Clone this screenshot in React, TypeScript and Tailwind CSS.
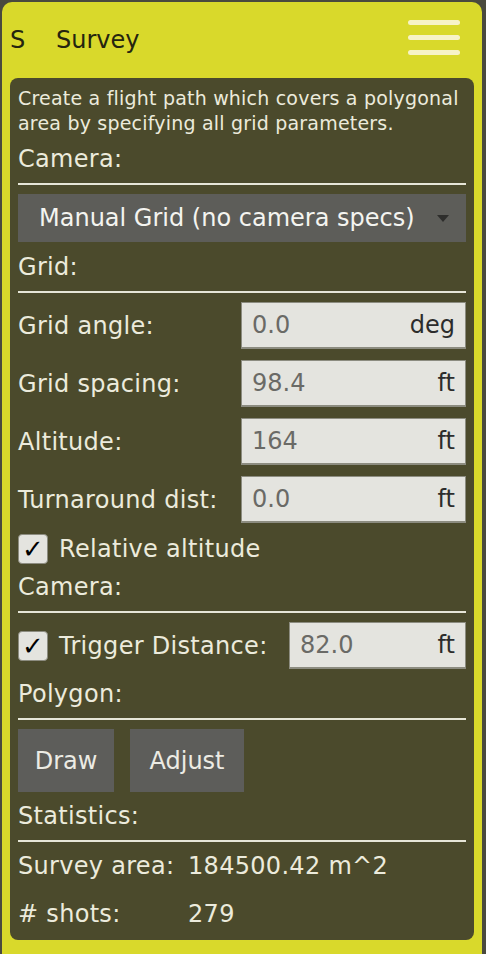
const font = "font-['DejaVu_Sans','Liberation_Sans',sans-serif]"

function SectionTitle({ children, className = "" }: { children: React.ReactNode; className?: string }) {
  return (
    <div className={className}>
      <div className="h-[28px] leading-[28px] text-[24px] tracking-[0.3px]">{children}</div>
      <div className="mt-[10px] h-[2px] bg-[#e6e6d8]" />
    </div>
  )
}

function NumberField({ value, unit, width }: { value: string; unit: string; width: string }) {
  return (
    <div
      className={`${width} h-[47px] flex items-center justify-between bg-[#e4e4df] border border-[#8c8c80] border-b-2 px-[10px] text-[24px]`}
    >
      <span className="text-[#6a6a66]">{value}</span>
      <span className="text-[#2c2c2c]">{unit}</span>
    </div>
  )
}

function Row({ label, value, unit }: { label: string; value: string; unit: string }) {
  return (
    <div className="flex items-center justify-between">
      <span className="text-[24px] tracking-[0.3px]">{label}</span>
      <NumberField value={value} unit={unit} width="w-[225px]" />
    </div>
  )
}

function Check() {
  return (
    <div className="w-[30px] h-[30px] rounded-[4px] bg-[#e4e4df] border border-[#8c8c80] flex items-center justify-center text-[26px] leading-none text-black">
      ✓
    </div>
  )
}

export default function App() {
  const rows = [
    { label: "Grid angle:", value: "0.0", unit: "deg" },
    { label: "Grid spacing:", value: "98.4", unit: "ft" },
    { label: "Altitude:", value: "164", unit: "ft" },
    { label: "Turnaround dist:", value: "0.0", unit: "ft" },
  ]

  return (
    <div className={`${font} min-h-[954px] bg-[#4a4a3e] pt-[2px] pl-[2px] overflow-hidden`}>
      <div className="w-[480px] h-[952px] bg-[#d9d92b] rounded-t-[10px] px-[8px] flex flex-col">
        {/* header */}
        <div className="h-[76px] flex items-center justify-between text-[#25250f]">
          <div className="flex items-center text-[24px]">
            <span className="w-[46px]">S</span>
            <span>Survey</span>
          </div>
          <div className="flex flex-col gap-[10px] mr-[14px] mb-[6px]">
            <div className="h-[5px] w-[52px] rounded-full bg-[#f7f3c6]" />
            <div className="h-[5px] w-[52px] rounded-full bg-[#f7f3c6]" />
            <div className="h-[5px] w-[52px] rounded-full bg-[#f7f3c6]" />
          </div>
        </div>

        {/* panel */}
        <div className="h-[862px] bg-[#4b4a2c] rounded-[8px] px-[8px] pt-[8px] text-[#ecebdc]">
          <p className="text-[19px] leading-[25px] tracking-[0.2px]">
            Create a flight path which covers a polygonal area by specifying all grid parameters.
          </p>

          <SectionTitle className="mt-[9px]">Camera:</SectionTitle>

          <div className="mt-[9px] h-[48px] bg-[#5d5d59] flex items-center justify-between pl-[21px] pr-[17px]">
            <span className="text-[24px] text-[#f4f4f0]">Manual Grid (no camera specs)</span>
            <span className="w-0 h-0 border-l-[6px] border-r-[6px] border-t-[7px] border-l-transparent border-r-transparent border-t-[#2e2e2c]" />
          </div>

          <SectionTitle className="mt-[11px]">Grid:</SectionTitle>

          <div className="mt-[9px] flex flex-col gap-[11px]">
            {rows.map((r) => (
              <Row key={r.label} label={r.label} value={r.value} unit={r.unit} />
            ))}
          </div>

          <div className="mt-[11px] h-[30px] flex items-center gap-[11px]">
            <Check />
            <span className="text-[24px] tracking-[0.3px]">Relative altitude</span>
          </div>

          <SectionTitle className="mt-[9px]">Camera:</SectionTitle>

          <div className="mt-[9px] flex items-center justify-between">
            <div className="flex items-center gap-[11px]">
              <Check />
              <span className="text-[24px] tracking-[0.3px]">Trigger Distance:</span>
            </div>
            <NumberField value="82.0" unit="ft" width="w-[177px]" />
          </div>

          <SectionTitle className="mt-[11px]">Polygon:</SectionTitle>

          <div className="mt-[9px] flex gap-[16px]">
            <button className="w-[96px] h-[63px] bg-[#5d5d5a] text-[24px] text-[#ecebe4]">Draw</button>
            <button className="w-[114px] h-[63px] bg-[#5d5d5a] text-[24px] text-[#ecebe4]">Adjust</button>
          </div>

          <SectionTitle className="mt-[10px]">Statistics:</SectionTitle>

          <div className="mt-[10px] text-[24px] tracking-[0.3px]">
            <div className="h-[28px] flex items-center">
              <span className="w-[170px]">Survey area:</span>
              <span>184500.42 m^2</span>
            </div>
            <div className="mt-[20px] h-[28px] flex items-center">
              <span className="w-[170px]"># shots:</span>
              <span>279</span>
            </div>
          </div>
        </div>
      </div>
    </div>
  )
}
